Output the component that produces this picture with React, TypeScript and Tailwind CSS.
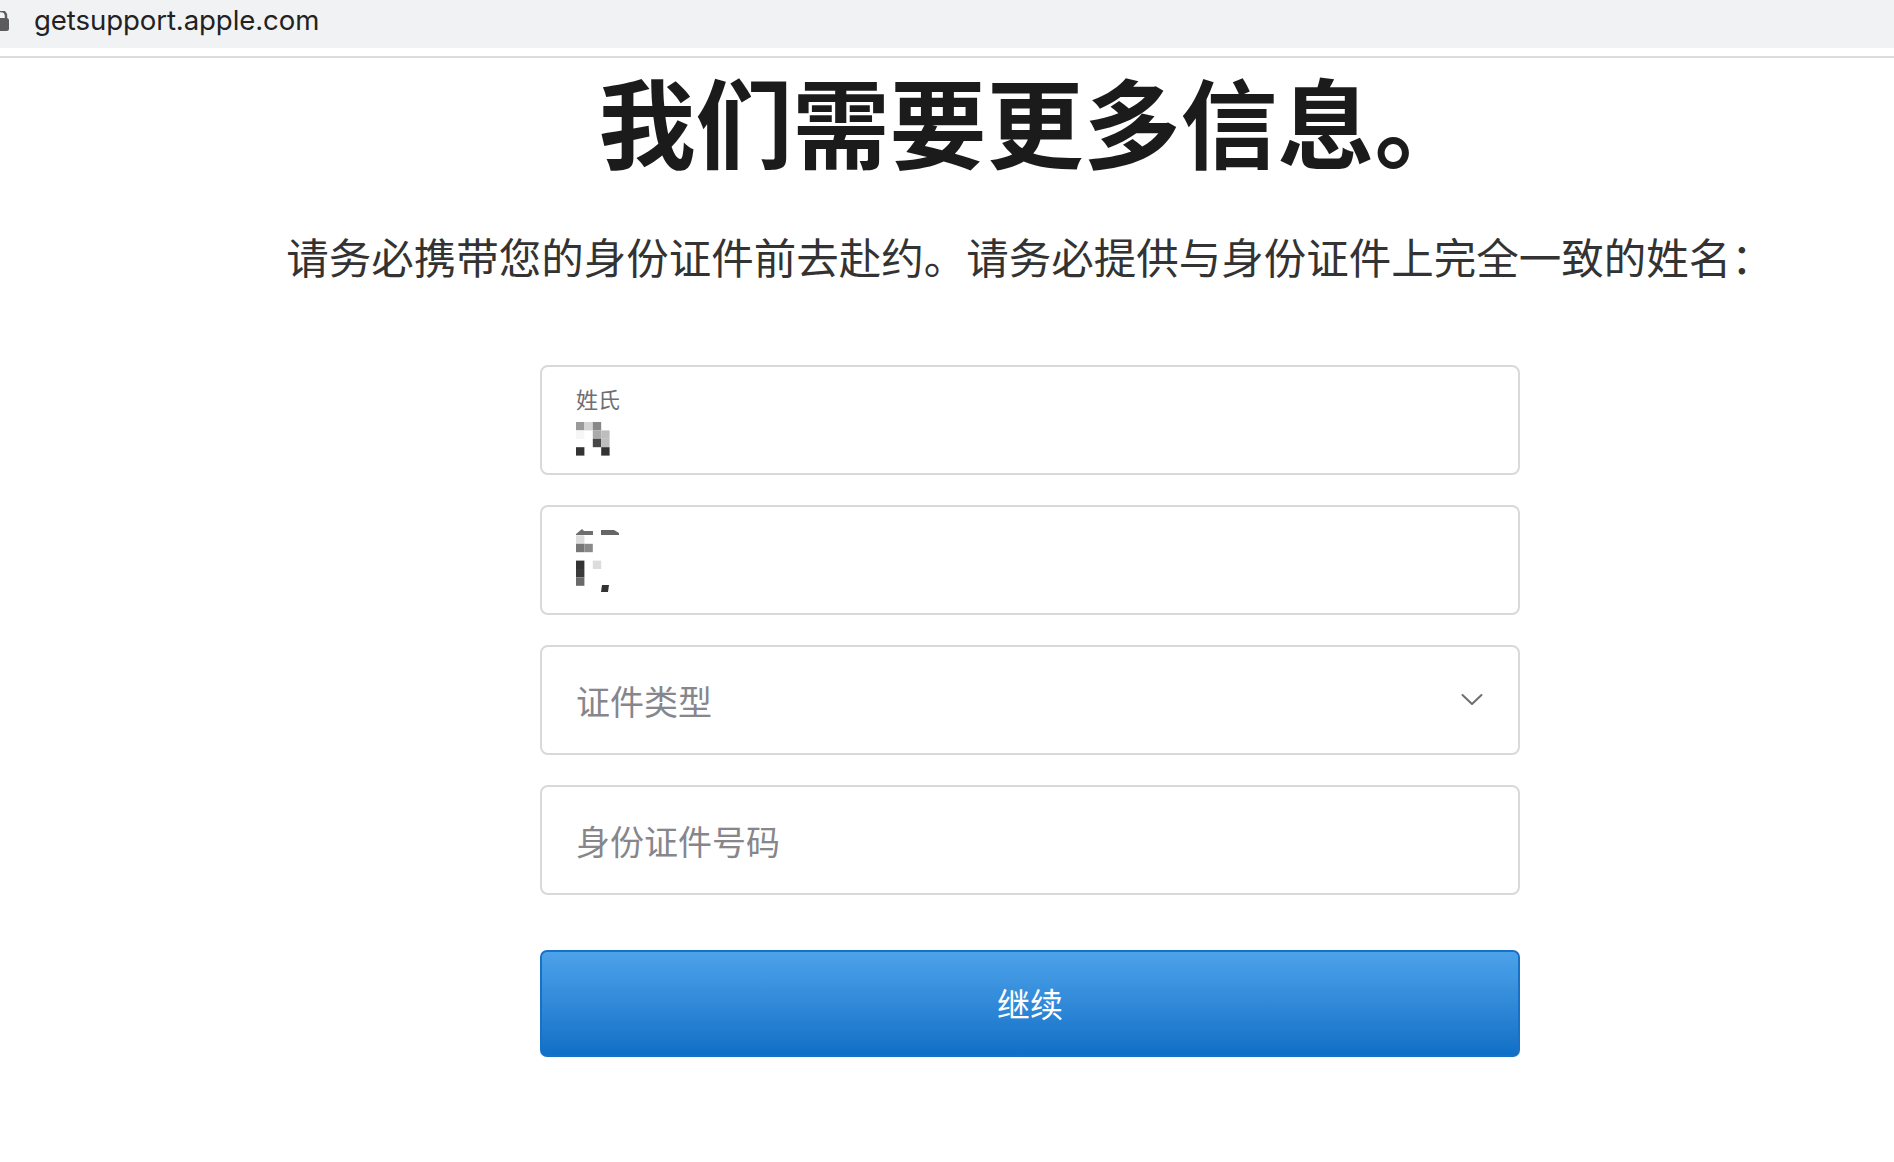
import React from "react";

const cjk = { fontFamily: '"Noto Sans CJK SC", "Noto Sans", sans-serif' };

// pixelated (censored) name blocks
const mosaicSurname: [number, number, string][] = [
  [0, 0, "#9a9a9a"], [1, 0, "#d4d4d4"], [2, 0, "#888888"],
  [0, 1, "#f6f6f6"], [2, 1, "#aaaaaa"], [3, 1, "#bdbdbd"],
  [2, 2, "#474747"], [3, 2, "#bdbdbd"],
  [0, 3, "#333333"], [3, 3, "#333333"],
];

const mosaicGiven: [number, number, string][] = [
  [0, 1, "#dddddd"],
  [0, 2, "#777777"], [1, 2, "#8a8a8a"],
  [0, 4, "#333333"], [2, 4, "#dcdcdc"],
  [0, 5, "#3a3a3a"],
  [0, 6, "#6a6a6a"],
];

function Mosaic({ cells, w, h, extra }: { cells: [number, number, string][]; w: number; h: number; extra?: React.ReactNode }) {
  return (
    <svg width={w} height={h} viewBox={`0 0 ${w} ${h}`}>
      {extra}
      {cells.map(([x, y, c], i) => (
        <rect key={i} x={x * 8.4} y={y * 8.4} width={8.4} height={8.4} fill={c} />
      ))}
    </svg>
  );
}

function Field({ children, className = "" }: { children: React.ReactNode; className?: string }) {
  return (
    <div className={`h-[110px] rounded-[8px] border-2 border-[#d9d9d9] bg-white px-[34px] ${className}`}>
      {children}
    </div>
  );
}

export default function App() {
  return (
    <div className="min-h-screen bg-white text-[#1d1d1f]">
      {/* browser address bar */}
      <div className="h-[48px] bg-[#f1f2f4] flex items-center pb-[6px]">
        <svg width="10" height="20" viewBox="0 0 10 20" className="shrink-0">
          <path d="M-4 8V5a5 5 0 0 1 10 0v3" fill="none" stroke="#5b5b5b" strokeWidth="2.4" />
          <rect x="-10" y="7" width="19" height="13" rx="2.5" fill="#5b5b5b" />
        </svg>
        <span className="ml-[24px] text-[27.6px] text-[#222] tracking-[-0.1px]" style={{ fontFamily: "Inter, sans-serif" }}>
          getsupport.apple.com
        </span>
      </div>
      <div className="h-[8px]" />
      <div className="h-[2px] bg-[#dcdce0]" />

      <main className="pl-[166px] flex flex-col items-center" style={cjk}>
        <h1 className="mt-[13px] ml-[10px] text-[97px] leading-[96px] font-bold text-[#1b1b1b] whitespace-nowrap">
          我们需要更多信息。
        </h1>
        <p className="mt-[64px] text-[42.5px] leading-[50px] text-[#333] whitespace-nowrap">
          请务必携带您的身份证件前去赴约。请务必提供与身份证件上完全一致的姓名：
        </p>

        <div className="mt-[84px] w-[980px] flex flex-col gap-[30px]">
          <Field className="pt-[16px]">
            <div className="text-[22px] leading-[30px] text-[#6e6e73]">姓氏</div>
            <div className="mt-[9px]">
              <Mosaic cells={mosaicSurname} w={36} h={34} />
            </div>
          </Field>

          <Field className="pt-[20px]">
            <Mosaic
              cells={mosaicGiven}
              w={46}
              h={66}
              extra={
                <>
                  <path d="M0 7 L6 2 L8 4 L17 4 L17 8 L0 8 Z" fill="#6f6f6f" />
                  <path d="M25 3 L38 3 L43 6 L43 8 L25 8 Z" fill="#666" />
                  <path d="M26 58 L33 58 L32 65 L25 65 Z" fill="#333" />
                </>
              }
            />
          </Field>

          <Field className="flex items-center justify-between">
            <span className="text-[34px] text-[#86868b]">证件类型</span>
            <svg width="24" height="14" viewBox="0 0 24 14" fill="none">
              <path d="M2.5 2 L12 11 L21.5 2" stroke="#6e6e6e" strokeWidth="2" strokeLinecap="round" strokeLinejoin="round" />
            </svg>
          </Field>

          <Field className="flex items-center">
            <span className="text-[34px] text-[#86868b]">身份证件号码</span>
          </Field>
        </div>

        <button
          type="button"
          className="mt-[55px] w-[980px] h-[107px] rounded-[7px] border-2 border-[#1771c6] bg-gradient-to-b from-[#4ca3ea] to-[#0f6fc6] text-white text-[33px]"
          style={cjk}
        >
          继续
        </button>
      </main>
    </div>
  );
}
